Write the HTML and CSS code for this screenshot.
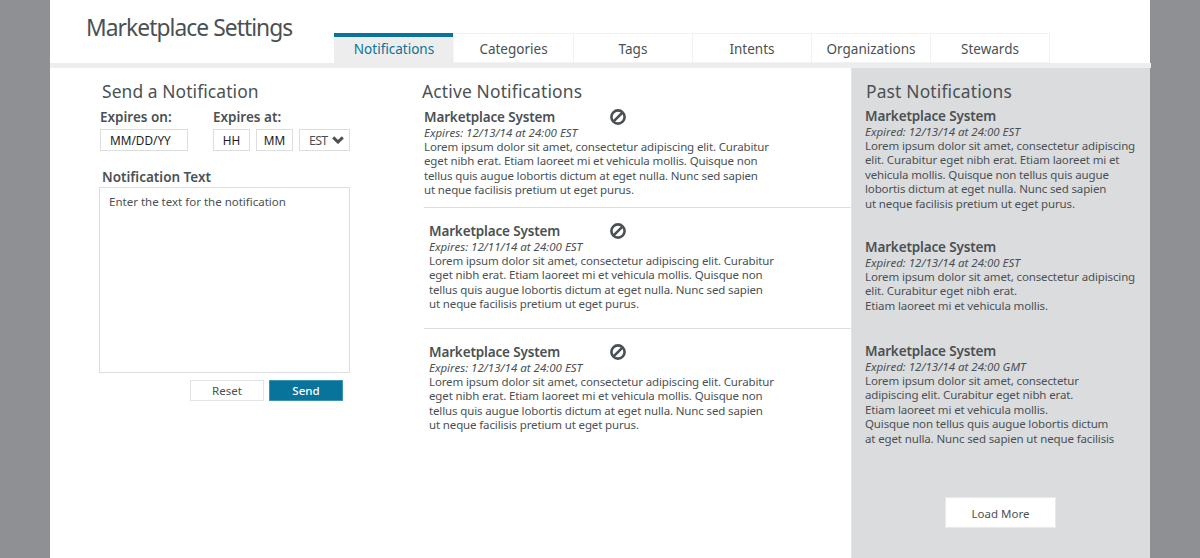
FILE: index.html
```html
<!DOCTYPE html>
<html lang="en">
<head>
<meta charset="utf-8">
<title>Marketplace Settings</title>
<link rel="stylesheet" href="styles.css">
</head>
<body>
<svg class="defs" width="0" height="0" aria-hidden="true">
  <symbol id="ban" viewBox="0 0 16 16"><circle cx="8" cy="8" r="6.6"/><path d="M3.6 12.4 12.4 3.6"/></symbol>
</svg>
<div class="page">
  <header class="header">
    <h1 class="title">Marketplace Settings</h1>
    <nav class="tabs">
      <a class="tab tab-active">Notifications</a>
      <a class="tab">Categories</a>
      <a class="tab">Tags</a>
      <a class="tab">Intents</a>
      <a class="tab">Organizations</a>
      <a class="tab">Stewards</a>
    </nav>
  </header>
  <main class="content">
    <section class="send">
      <h2 class="heading send-heading">Send a Notification</h2>
      <div class="expiry">
        <div class="expiry-date">
          <div class="label">Expires on:</div>
          <div class="field field-date">MM/DD/YY</div>
        </div>
        <div class="expiry-time">
          <div class="label">Expires at:</div>
          <div class="time-fields">
            <div class="field field-time">HH</div>
            <div class="field field-time">MM</div>
            <div class="field field-zone"><span class="zone">EST</span><svg class="chevron" viewBox="0 0 12 8"><path d="M1.2 1.4 6 6 10.8 1.4"/></svg></div>
          </div>
        </div>
      </div>
      <div class="label text-label">Notification Text</div>
      <div class="textbox">Enter the text for the notification</div>
      <div class="actions">
        <div class="button">Reset</div>
        <div class="button button-primary">Send</div>
      </div>
    </section>
    <section class="active">
      <h2 class="heading active-heading">Active Notifications</h2>
      <article class="item item-first">
        <div class="name">Marketplace System<svg class="ban"><use href="#ban"/></svg></div>
        <div class="date">Expires: 12/13/14 at 24:00 EST</div>
        <p class="text">Lorem ipsum dolor sit amet, consectetur adipiscing elit. Curabitur<br>eget nibh erat. Etiam laoreet mi et vehicula mollis. Quisque non<br>tellus quis augue lobortis dictum at eget nulla. Nunc sed sapien<br>ut neque facilisis pretium ut eget purus.</p>
      </article>
      <article class="item">
        <div class="name">Marketplace System<svg class="ban"><use href="#ban"/></svg></div>
        <div class="date">Expires: 12/11/14 at 24:00 EST</div>
        <p class="text">Lorem ipsum dolor sit amet, consectetur adipiscing elit. Curabitur<br>eget nibh erat. Etiam laoreet mi et vehicula mollis. Quisque non<br>tellus quis augue lobortis dictum at eget nulla. Nunc sed sapien<br>ut neque facilisis pretium ut eget purus.</p>
      </article>
      <article class="item">
        <div class="name">Marketplace System<svg class="ban"><use href="#ban"/></svg></div>
        <div class="date">Expires: 12/13/14 at 24:00 EST</div>
        <p class="text">Lorem ipsum dolor sit amet, consectetur adipiscing elit. Curabitur<br>eget nibh erat. Etiam laoreet mi et vehicula mollis. Quisque non<br>tellus quis augue lobortis dictum at eget nulla. Nunc sed sapien<br>ut neque facilisis pretium ut eget purus.</p>
      </article>
    </section>
    <aside class="past">
      <h2 class="heading past-heading">Past Notifications</h2>
      <article class="past-item past-item-long">
        <div class="name">Marketplace System</div>
        <div class="date">Expired: 12/13/14 at 24:00 EST</div>
        <p class="text">Lorem ipsum dolor sit amet, consectetur adipiscing<br>elit. Curabitur eget nibh erat. Etiam laoreet mi et<br>vehicula mollis. Quisque non tellus quis augue<br>lobortis dictum at eget nulla. Nunc sed sapien<br>ut neque facilisis pretium ut eget purus.</p>
      </article>
      <article class="past-item past-item-short">
        <div class="name">Marketplace System</div>
        <div class="date">Expired: 12/13/14 at 24:00 EST</div>
        <p class="text">Lorem ipsum dolor sit amet, consectetur adipiscing<br>elit. Curabitur eget nibh erat.<br>Etiam laoreet mi et vehicula mollis.</p>
      </article>
      <article class="past-item">
        <div class="name">Marketplace System</div>
        <div class="date">Expired: 12/13/14 at 24:00 GMT</div>
        <p class="text">Lorem ipsum dolor sit amet, consectetur<br>adipiscing elit. Curabitur eget nibh erat.<br>Etiam laoreet mi et vehicula mollis.<br>Quisque non tellus quis augue lobortis dictum<br>at eget nulla. Nunc sed sapien ut neque facilisis</p>
      </article>
      <div class="load-more">Load More</div>
    </aside>
  </main>
</div>
</body>
</html>
```

FILE: styles.css
```css
* { box-sizing: border-box; }
body {
  margin: 0;
  background: #8f9094;
  color: #4a5154;
  font-family: "Noto Sans", "Open Sans", sans-serif;
  font-size: 11.5px;
  line-height: 14.4px;
  white-space: nowrap;
}
h1, h2, p { margin: 0; font-weight: 400; }
.defs { position: absolute; }
.page {
  width: 1100px;
  height: 558px;
  margin: 0 auto;
  background: #fff;
  display: flex;
  flex-direction: column;
}
.header {
  width: 1101px;
  height: 68px;
  flex: none;
  display: flex;
  background: linear-gradient(to right, #fff 1100px, transparent 1100px);
  background-clip: padding-box;
  border-bottom: 5px solid #ededed;
}
.title {
  width: 284px;
  padding: 12px 0 0 36px;
  font-size: 22.8px;
  line-height: 32px;
  letter-spacing: -0.95px;
}
.tabs { display: flex; padding-top: 33px; }
.tab {
  width: 119px;
  height: 30px;
  border: solid #f2f2f2;
  border-width: 1px 1px 1px 0;
  text-align: center;
  font-size: 13.5px;
  line-height: 31px;
}
.tab-active {
  width: 119px;
  height: 30px;
  padding-left: 1px;
  background: #ededed;
  border: 0;
  border-top: 4px solid #08749b;
  color: #08749b;
  line-height: 25px;
}
.tab-active + .tab { width: 121px; border-left: 1px solid #f5f5f5; }
.content { flex: 1; display: flex; }
.heading { font-size: 17.4px; line-height: 24px; letter-spacing: 0.17px; }
.send { width: 371px; padding: 11px 0 0 50px; }
.send-heading { padding-left: 2px; letter-spacing: 0.1px; }
.active-heading { padding-left: 1px; }
.label { font-size: 13.5px; font-weight: 600; line-height: 18px; }
.expiry { display: flex; padding-top: 5px; }
.expiry-date { width: 113px; }
.time-fields { display: flex; gap: 6px; }
.field {
  height: 22px;
  margin-top: 3px;
  border: 1px solid #dcdddf;
  color: #1b1b1d;
  font-size: 11.8px;
  line-height: 21px;
  text-align: center;
}
.field-date { width: 88px; padding-left: 9px; text-align: left; }
.field-time { width: 37px; }
.field-zone {
  width: 51px;
  padding: 0 5px 0 9px;
  display: flex;
  align-items: center;
  justify-content: space-between;
  color: #4a5154;
}
.zone { font-size: 12.4px; line-height: 20px; padding-top: 2px; letter-spacing: -0.7px; }
.chevron { width: 12px; height: 8px; fill: none; stroke: #4a5154; stroke-width: 3; }
.text-label { padding: 17px 0 0 2px; }
.textbox {
  width: 251px;
  height: 186px;
  margin: 1px 0 0 -1px;
  padding: 7px 9px;
  border: 1px solid #dcdddf;
}
.actions { display: flex; gap: 5px; padding: 7px 0 0 90px; }
.button {
  width: 74px;
  height: 21px;
  border: 1px solid #e2e3e4;
  line-height: 20px;
  text-align: center;
}
.button-primary { background: #08749b; border-color: #3f93b2; color: #fff; font-weight: 500; }
.active { width: 430px; padding-top: 11px; }
.name { position: relative; font-size: 13.5px; font-weight: 600; line-height: 18px; letter-spacing: -0.15px; }
.date { font-style: italic; line-height: 14px; }
.text { letter-spacing: -0.135px; }
.ban {
  position: absolute;
  left: 180.5px;
  top: 1px;
  width: 16px;
  height: 16px;
  fill: none;
  stroke: #4a5154;
  stroke-width: 2.6;
}
.item {
  height: 121px;
  margin-left: 3px;
  padding: 14px 0 0 5px;
}
.item-first { height: 104px; padding: 5px 0 0; }
.item-first .ban { left: 185.5px; top: 0.5px; }
.item + .item { border-top: 1px solid #dcdddf; }
.past {
  width: 299px;
  padding: 11px 0 0 13px;
  background: #dbdcde;
  border-left: 1px solid #e2e3e5;
}
.past-heading { padding-left: 1px; }
.past-item { padding-top: 4px; }
.past-item-long { height: 131px; }
.past-item-short { height: 104px; }
.load-more {
  width: 111px;
  height: 31px;
  margin: 51px 0 0 80px;
  background: #fff;
  border: 1px solid #e8e9ea;
  line-height: 31px;
  text-align: center;
}
```
